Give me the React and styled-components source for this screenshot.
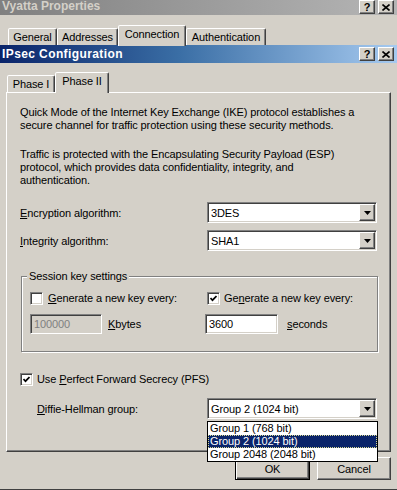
import React from "react";
import styled, { createGlobalStyle, css } from "styled-components";

const GlobalStyle = createGlobalStyle`
  html, body { margin: 0; padding: 0; background: #d4d0c8; }
  body {
    font-family: "Liberation Sans", Arial, sans-serif;
    font-size: 11px;
    letter-spacing: -0.1px;
    color: #000;
  }
`;

const raised = css`
  border-style: solid;
  border-width: 1px;
  border-color: #ffffff #404040 #404040 #ffffff;
  box-shadow: inset -1px -1px 0 #808080;
`;

const sunken = css`
  border-style: solid;
  border-width: 1px;
  border-color: #808080 #ffffff #ffffff #808080;
  box-shadow: inset 1px 1px 0 #404040, inset -1px -1px 0 #d4d0c8;
`;

const Screen = styled.div`
  position: relative;
  width: 397px;
  height: 490px;
  overflow: hidden;
  display: flex;
  flex-direction: column;
  background: #d4d0c8;
`;

const TitleBar = styled.div`
  flex: none;
  height: ${(p) => p.$h}px;
  display: flex;
  align-items: ${(p) => (p.$active ? "center" : "flex-start")};
  justify-content: space-between;
  background: ${(p) =>
    p.$active
      ? "linear-gradient(90deg, #0a246a 0%, #3a6ea5 45%, #a6caf0 100%)"
      : "linear-gradient(90deg, #808080 0%, #b5b5b5 100%)"};
`;

const TitleText = styled.span`
  padding-left: 2px;
  font-weight: bold;
  font-size: 12px;
  line-height: 14px;
  letter-spacing: ${(p) => (p.$active ? 0.4 : 0)}px;
  color: ${(p) => (p.$active ? "#ffffff" : "#d4d0c8")};
  margin-top: ${(p) => (p.$active ? 0 : -1)}px;
`;

const CaptionGroup = styled.div`
  display: flex;
  gap: 3px;
  padding-right: 3px;
`;

const CaptionButton = styled.div`
  ${raised};
  box-sizing: border-box;
  width: 16px;
  height: 14px;
  background: #d4d0c8;
  display: flex;
  align-items: center;
  justify-content: center;
  font-weight: bold;
  font-size: 11px;
  line-height: 11px;
`;

const TabStrip = styled.div`
  flex: none;
  display: flex;
  align-items: flex-end;
  height: ${(p) => p.$h}px;
  padding-left: ${(p) => p.$indent}px;
  box-sizing: border-box;
`;

const Tab = styled.div`
  position: relative;
  box-sizing: border-box;
  width: ${(p) => p.$w}px;
  height: ${(p) => (p.$active ? 21 : 17)}px;
  margin-bottom: ${(p) => (p.$active ? -1 : 0)}px;
  z-index: ${(p) => (p.$active ? 1 : 0)};
  background: #d4d0c8;
  border-style: solid;
  border-width: 1px 1px 0 1px;
  border-color: #ffffff #404040 transparent #ffffff;
  border-radius: 2px 2px 0 0;
  box-shadow: inset -1px 0 0 #808080;
  display: flex;
  justify-content: center;
  padding-top: 2px;
  line-height: 13px;
  white-space: nowrap;
`;

const Dialog = styled.div`
  flex: 1;
  display: flex;
  flex-direction: column;
  border-bottom: 1px solid #404040;
  box-sizing: border-box;
`;

const Body = styled.div`
  flex: 1;
  display: flex;
  flex-direction: column;
  padding: 9px 6px 0 6px;
`;

const Panel = styled.div`
  box-sizing: border-box;
  height: 360px;
  border-style: solid;
  border-width: 1px;
  border-color: #ffffff #404040 #404040 #ffffff;
  box-shadow: inset -1px -1px 0 #808080;
  padding: 13px 13px 0 13px;
`;

const Para = styled.p`
  margin: ${(p) => p.$top || 0}px 0 0 0;
  line-height: 13px;
`;

const U = styled.span`
  text-decoration: underline;
`;

const FieldRow = styled.div`
  display: flex;
  align-items: center;
  height: 21px;
  margin-top: ${(p) => p.$top}px;
`;

const FieldLabel = styled.label`
  flex: none;
  width: ${(p) => 187 - (p.$indent || 0)}px;
  padding-left: ${(p) => p.$indent || 0}px;
`;

const Combo = styled.div`
  ${sunken};
  flex: 1;
  box-sizing: border-box;
  height: 21px;
  padding: 1px;
  background: #fff;
  display: flex;
  align-items: center;
`;

const ComboText = styled.span`
  padding-left: 2px;
`;

const ArrowButton = styled.div`
  ${raised};
  box-sizing: border-box;
  margin-left: auto;
  width: 16px;
  height: 17px;
  background: #d4d0c8;
  display: flex;
  align-items: center;
  justify-content: center;
`;

const GroupBox = styled.fieldset`
  margin: 19px -1px 0 1px;
  padding: 9px 0 17px 8px;
  border: 1px solid #808080;
  box-shadow: inset 1px 1px 0 #ffffff, 1px 1px 0 #ffffff;
  display: grid;
  grid-template-columns: 175px 1fr;
  row-gap: 9px;
`;

const Legend = styled.legend`
  margin-left: -3px;
  padding: 0 2px;
  line-height: 13px;
  background: #d4d0c8;
`;

const CheckRow = styled.div`
  display: flex;
  align-items: center;
  gap: ${(p) => p.$gap || 5}px;
  margin-left: ${(p) => p.$left || 0}px;
  margin-top: ${(p) => p.$top || 0}px;
  line-height: 13px;
`;

const CheckBox = styled.div`
  ${sunken};
  flex: none;
  box-sizing: border-box;
  width: 13px;
  height: 13px;
  background: #fff;
  display: flex;
  align-items: center;
  justify-content: center;
`;

const InputRow = styled.div`
  display: flex;
  align-items: center;
  gap: ${(p) => p.$gap}px;
`;

const TextBox = styled.div`
  ${sunken};
  box-sizing: border-box;
  width: ${(p) => p.$w}px;
  height: 20px;
  padding: 0 3px;
  display: flex;
  align-items: center;
  background: ${(p) => (p.$disabled ? "#d4d0c8" : "#fff")};
  color: ${(p) => (p.$disabled ? "#808080" : "#000")};
`;

const ButtonRow = styled.div`
  display: flex;
  justify-content: flex-end;
  gap: 7px;
  margin-top: 5px;
`;

const PushButton = styled.div`
  box-sizing: border-box;
  width: ${(p) => p.$w}px;
  height: 23px;
  background: #d4d0c8;
  display: flex;
  align-items: center;
  justify-content: center;
  ${(p) =>
    p.$default
      ? css`
          border: 1px solid #000;
          box-shadow: inset 1px 1px 0 #fff, inset -1px -1px 0 #404040,
            inset -2px -2px 0 #808080;
        `
      : raised};
`;

const DropList = styled.div`
  position: absolute;
  left: 207px;
  top: 421px;
  width: 171px;
  box-sizing: border-box;
  border: 1px solid #000;
  background: #fff;
  z-index: 5;
`;

const DropItem = styled.div`
  height: 13px;
  line-height: 13px;
  padding-left: 2px;
  white-space: nowrap;
  ${(p) =>
    p.$selected &&
    css`
      background: #0a246a;
      color: #fff;
      outline: 1px dotted #d8d890;
      outline-offset: -1px;
    `}
`;

const Arrow = () => (
  <svg width="7" height="4" viewBox="0 0 7 4">
    <polygon points="0,0 7,0 3.5,4" fill="#000" />
  </svg>
);

const CloseGlyph = () => (
  <svg width="8" height="7" viewBox="0 0 8 7">
    <path d="M0.5 0.5 L7.5 6.5 M7.5 0.5 L0.5 6.5" stroke="#000" strokeWidth="1.6" />
  </svg>
);

const Check = () => (
  <svg width="7" height="7" viewBox="0 0 7 7">
    <path d="M0.5 3 L2.5 5.2 L6.5 1" stroke="#000" strokeWidth="1.7" fill="none" />
  </svg>
);

const Captions = () => (
  <CaptionGroup>
    <CaptionButton>?</CaptionButton>
    <CaptionButton>
      <CloseGlyph />
    </CaptionButton>
  </CaptionGroup>
);

const groups = ["Group 1 (768 bit)", "Group 2 (1024 bit)", "Group 2048 (2048 bit)"];

export default function App() {
  return (
    <Screen>
      <GlobalStyle />
      <TitleBar $h={15}>
        <TitleText>Vyatta Properties</TitleText>
        <Captions />
      </TitleBar>
      <TabStrip $h={30} $indent={8}>
        <Tab $w={49}>General</Tab>
        <Tab $w={61}>Addresses</Tab>
        <Tab $w={68} $active>Connection</Tab>
        <Tab $w={80}>Authentication</Tab>
      </TabStrip>

      <Dialog>
        <TitleBar $h={18} $active>
          <TitleText $active>IPsec Configuration</TitleText>
          <Captions />
        </TitleBar>
        <Body>
          <TabStrip $h={20} $indent={1}>
            <Tab $w={48}>Phase I</Tab>
            <Tab $w={54} $active>Phase II</Tab>
          </TabStrip>
          <Panel>
            <Para>
              Quick Mode of the Internet Key Exchange (IKE) protocol establishes a
              <br />
              secure channel for traffic protection using these security methods.
            </Para>
            <Para $top={16}>
              Traffic is protected with the Encapsulating Security Payload (ESP)
              <br />
              protocol, which provides data confidentiality, integrity, and
              <br />
              authentication.
            </Para>

            <FieldRow $top={15}>
              <FieldLabel>
                <U>E</U>ncryption algorithm:
              </FieldLabel>
              <Combo>
                <ComboText>3DES</ComboText>
                <ArrowButton>
                  <Arrow />
                </ArrowButton>
              </Combo>
            </FieldRow>
            <FieldRow $top={7}>
              <FieldLabel>
                <U>I</U>ntegrity algorithm:
              </FieldLabel>
              <Combo>
                <ComboText>SHA1</ComboText>
                <ArrowButton>
                  <Arrow />
                </ArrowButton>
              </Combo>
            </FieldRow>

            <GroupBox>
              <Legend>Session key settings</Legend>
              <CheckRow>
                <CheckBox />
                <span>
                  <U>G</U>enerate a new key every:
                </span>
              </CheckRow>
              <CheckRow $left={2} $gap={4}>
                <CheckBox>
                  <Check />
                </CheckBox>
                <span>
                  Ge<U>n</U>erate a new key every:
                </span>
              </CheckRow>
              <InputRow $gap={6}>
                <TextBox $w={72} $disabled>100000</TextBox>
                <span>
                  <U>K</U>bytes
                </span>
              </InputRow>
              <InputRow $gap={9}>
                <TextBox $w={73}>3600</TextBox>
                <span>
                  <U>s</U>econds
                </span>
              </InputRow>
            </GroupBox>

            <CheckRow $top={21} $gap={4}>
              <CheckBox>
                <Check />
              </CheckBox>
              <span>
                Use <U>P</U>erfect Forward Secrecy (PFS)
              </span>
            </CheckRow>
            <FieldRow $top={12}>
              <FieldLabel $indent={17}>
                <U>D</U>iffie-Hellman group:
              </FieldLabel>
              <Combo>
                <ComboText>Group 2 (1024 bit)</ComboText>
                <ArrowButton>
                  <Arrow />
                </ArrowButton>
              </Combo>
            </FieldRow>
          </Panel>
          <ButtonRow>
            <PushButton $w={75} $default>OK</PushButton>
            <PushButton $w={74}>Cancel</PushButton>
          </ButtonRow>
        </Body>
      </Dialog>

      <DropList>
        {groups.map((g, i) => (
          <DropItem key={g} $selected={i === 1}>
            {g}
          </DropItem>
        ))}
      </DropList>
    </Screen>
  );
}
